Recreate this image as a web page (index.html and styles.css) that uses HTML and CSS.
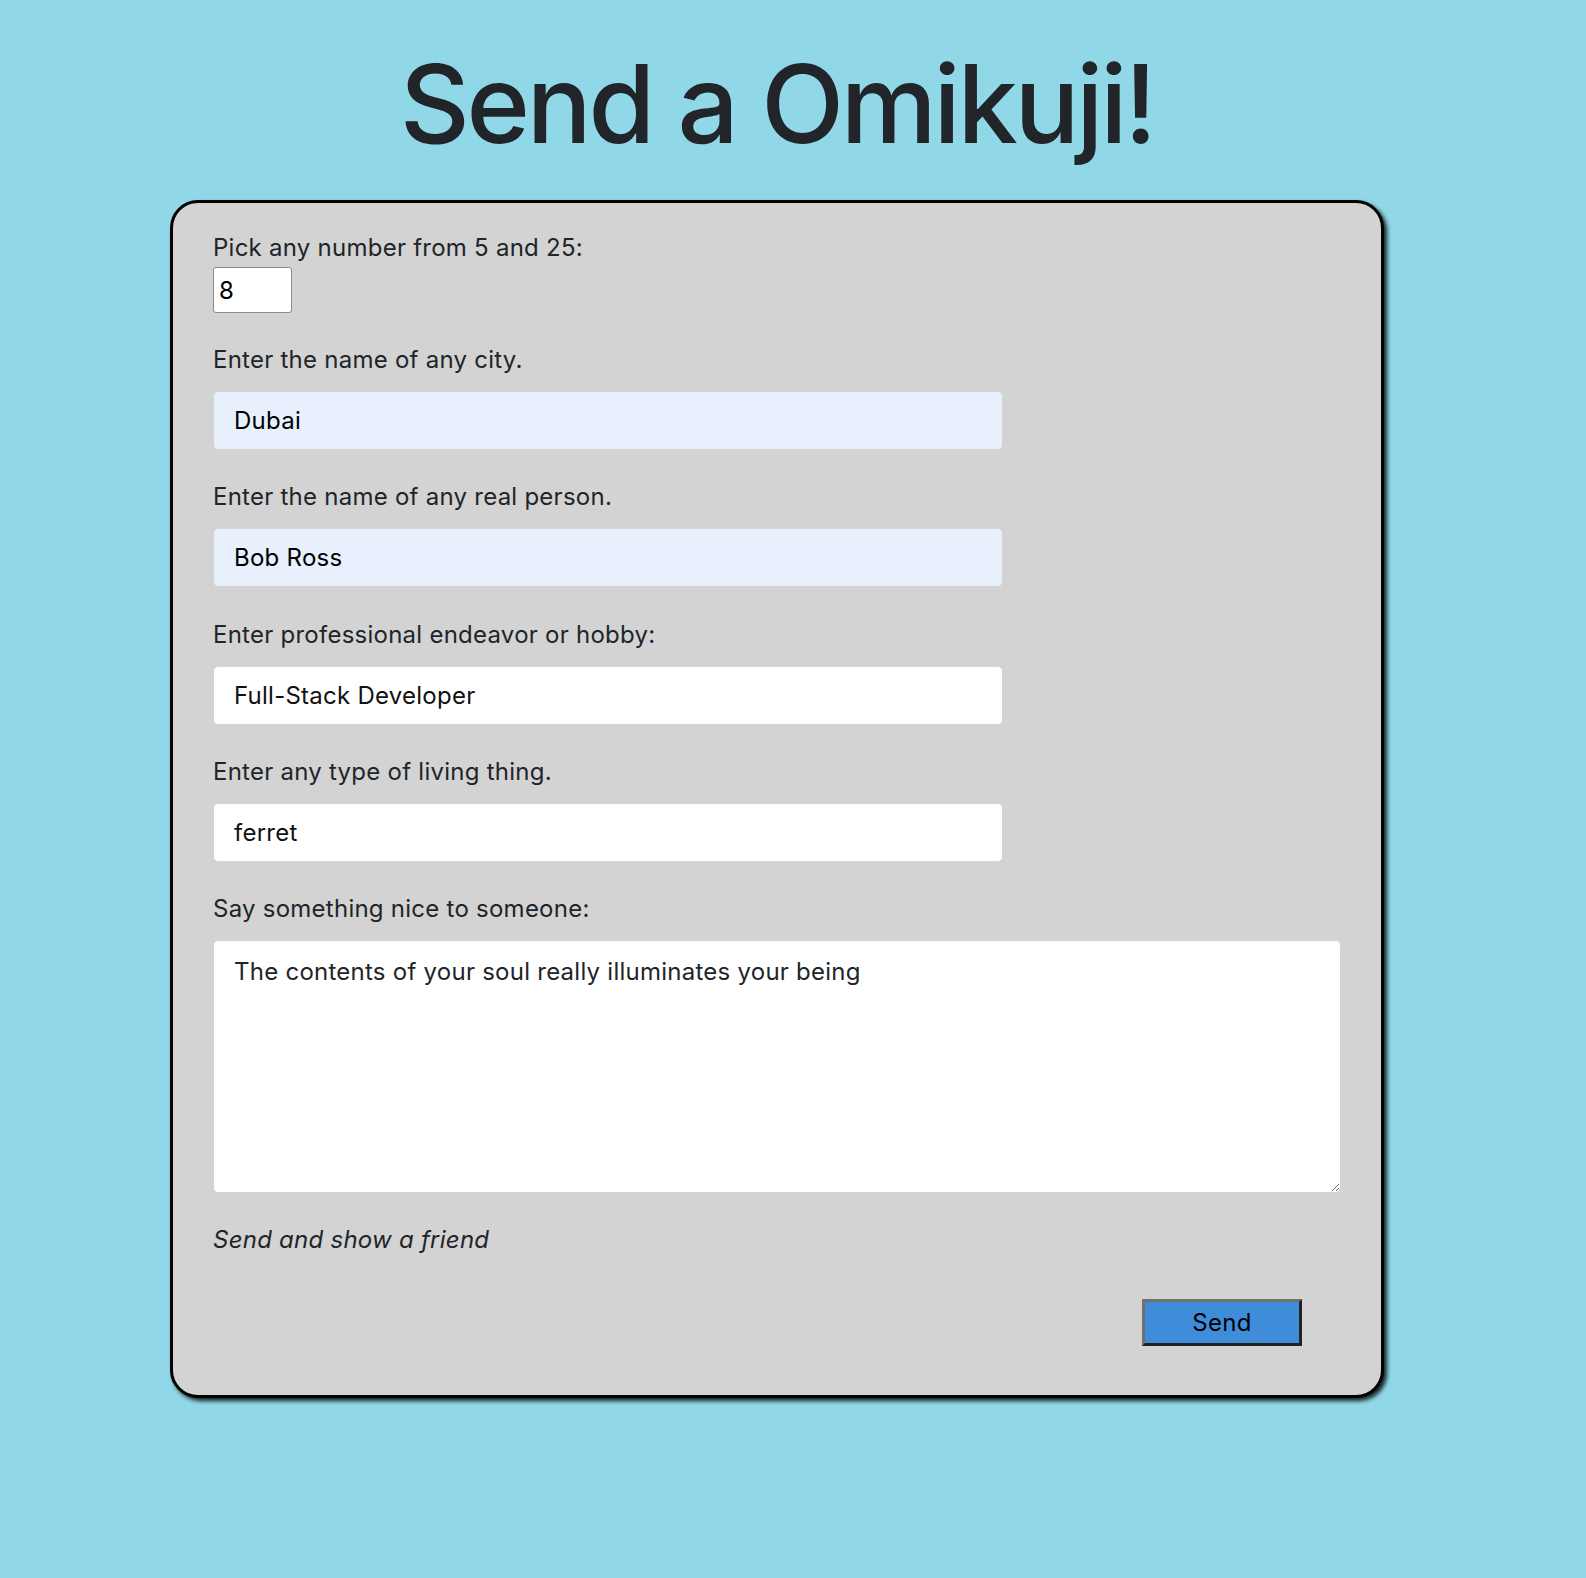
FILE: index.html
```html
<!DOCTYPE html>
<html lang="en">
<head>
<meta charset="utf-8">
<title>Send a Omikuji!</title>
<link rel="stylesheet" href="styles.css">
</head>
<body>
<div class="page">
  <h1 class="title">Send a Omikuji!</h1>
  <form class="card">
    <div class="group group-first">
      <label class="label label-inline" for="num">Pick any number from 5 and 25:</label><br>
      <input class="num-input" type="number" id="num" value="8">
    </div>
    <div class="group">
      <label class="label" for="city">Enter the name of any city.</label>
      <input class="field field-filled" type="text" id="city" value="Dubai">
    </div>
    <div class="group">
      <label class="label" for="person">Enter the name of any real person.</label>
      <input class="field field-filled" type="text" id="person" value="Bob Ross">
    </div>
    <div class="group">
      <label class="label" for="hobby">Enter professional endeavor or hobby:</label>
      <input class="field" type="text" id="hobby" value="Full-Stack Developer">
    </div>
    <div class="group">
      <label class="label" for="living">Enter any type of living thing.</label>
      <input class="field" type="text" id="living" value="ferret">
    </div>
    <div class="group">
      <label class="label" for="nice">Say something nice to someone:</label>
      <textarea class="area" id="nice">The contents of your soul really illuminates your being</textarea>
    </div>
    <p class="note">Send and show a friend</p>
    <div class="actions">
      <button class="send" type="button">Send</button>
    </div>
  </form>
</div>
</body>
</html>
```

FILE: styles.css
```css
html, body {
  margin: 0;
  padding: 0;
}

body {
  background: #90d8e8;
  font-family: Inter, "Noto Sans", "Liberation Sans", sans-serif;
  color: #212529;
  min-height: 1578px;
}

.page {
  width: 1554px;
  padding-top: 38px;
}

.title {
  margin: 0 0 30px;
  text-align: center;
  font-size: 108px;
  line-height: 132px;
  font-weight: 500;
  letter-spacing: -0.03em;
  color: #212529;
}

.card {
  box-sizing: border-box;
  width: 1214px;
  margin: 0 auto;
  background: #d3d3d3;
  border: 3px solid #000;
  border-radius: 28px;
  box-shadow: 3px 3px 4px rgba(0, 0, 0, 0.85);
  padding: 27px 40px 49px;
  letter-spacing: 0.25px;
}

.group {
  display: flex;
  flex-direction: column;
  align-items: flex-start;
  margin-bottom: 29.3px;
}

.group-first {
  display: block;
  margin-bottom: 29px;
}

.label {
  display: block;
  font-size: 24px;
  line-height: 36px;
  margin-bottom: 13px;
  color: #212529;
}

.label-inline {
  display: inline;
  margin-bottom: 0;
}

.num-input {
  box-sizing: border-box;
  display: block;
  width: 79px;
  height: 46px;
  margin-top: 1px;
  padding: 0 0 0 5px;
  font-family: Inter, "Noto Sans", "Liberation Sans", sans-serif;
  font-size: 24px;
  color: #000;
  background: #fff;
  border: 1px solid #8a8a8a;
  border-radius: 3px;
}

.field {
  box-sizing: border-box;
  width: 790px;
  height: 59px;
  padding: 0 19px 0 20px;
  font-family: Inter, "Noto Sans", "Liberation Sans", sans-serif;
  font-size: 24px;
  letter-spacing: 0.25px;
  color: #111;
  background: #fff;
  border: 1px solid #ced4da;
  border-radius: 5px;
  outline: none;
}

.field-filled {
  background: #e8f0fe;
  color: #000;
}

.area {
  box-sizing: border-box;
  width: 1128px;
  height: 253px;
  padding: 13px 19px 13px 20px;
  font-family: Inter, "Noto Sans", "Liberation Sans", sans-serif;
  font-size: 24px;
  line-height: 36px;
  letter-spacing: 0.25px;
  color: #212529;
  background: #fff;
  border: 1px solid #ced4da;
  border-radius: 5px;
  outline: none;
}

.note {
  margin: 0;
  font-size: 24px;
  line-height: 36px;
  font-style: italic;
  color: #212529;
}

.actions {
  display: flex;
  justify-content: flex-end;
  padding-right: 39px;
  margin-top: 41px;
}

.send {
  box-sizing: border-box;
  width: 160px;
  height: 47px;
  padding: 0;
  font-family: Inter, "Noto Sans", "Liberation Sans", sans-serif;
  font-size: 24px;
  letter-spacing: 0.25px;
  color: #000;
  background: #3f8cda;
  border: 3px solid;
  border-color: #707070 #222 #222 #707070;
  border-radius: 0;
}
```
